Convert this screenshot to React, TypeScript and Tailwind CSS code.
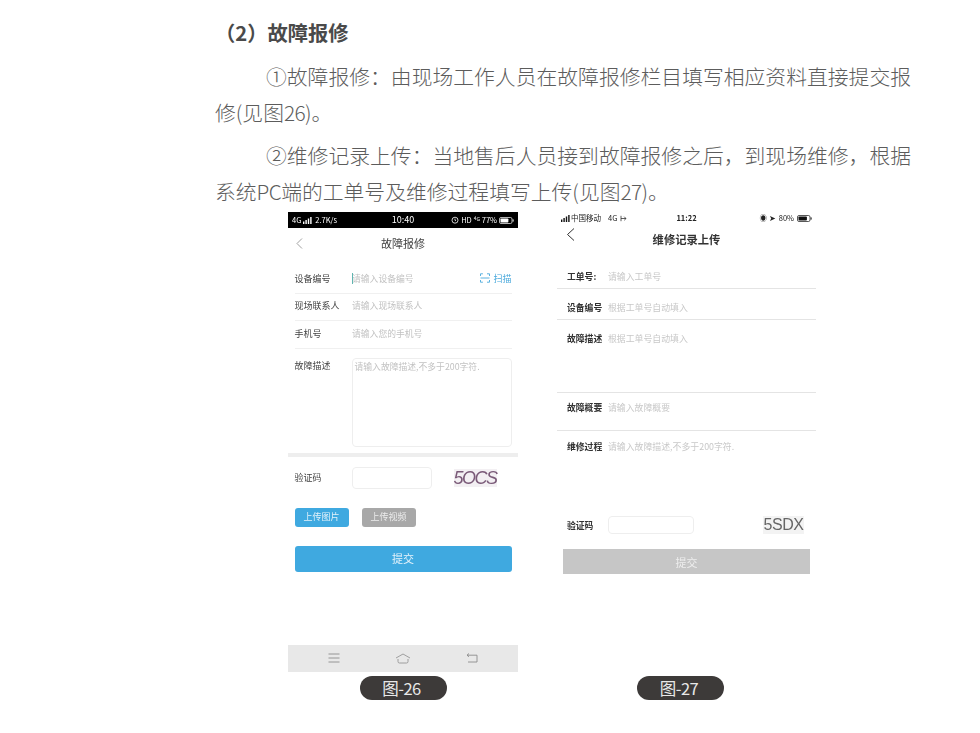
const cjk = { fontFamily: '"Noto Sans CJK SC", "Noto Sans", sans-serif' }

function StatusBattery({ level, dark }: { level: number; dark?: boolean }) {
  const color = dark ? '#ffffff' : '#111111'
  return (
    <svg width="15" height="7" viewBox="0 0 15 7">
      <rect x="0.5" y="0.5" width="12.5" height="6" rx="1.5" fill="none" stroke={color} strokeWidth="0.7" />
      <rect x="1.5" y="1.5" width={10.5 * level} height="4" rx="0.8" fill={color} />
      <rect x="13.6" y="2.4" width="1" height="2.2" fill={color} />
    </svg>
  )
}

function Signal({ color }: { color: string }) {
  return (
    <svg width="9" height="7" viewBox="0 0 9 7" fill={color}>
      <rect x="0" y="4.5" width="1.4" height="2.5" />
      <rect x="2.4" y="3" width="1.4" height="4" />
      <rect x="4.8" y="1.5" width="1.4" height="5.5" />
      <rect x="7.2" y="0" width="1.4" height="7" />
    </svg>
  )
}

function Row({ label, hint, cursor, extra }: { label: string; hint: string; cursor?: boolean; extra?: React.ReactNode }) {
  return (
    <div className="flex h-[27.5px] items-center border-b border-[#f0f0f0] pb-[2px]">
      <div className="w-[57.5px] text-[9px] text-[#444]">{label}</div>
      <div className="relative flex-1 text-[8.8px] text-[#c2c2c2]">
        {cursor && <span className="absolute left-0 top-[1px] h-[11px] w-[1px] bg-[#5fb5b0]" />}
        {hint}
      </div>
      {extra}
    </div>
  )
}

function Row2({ label, hint, h }: { label: string; hint: string; h: string }) {
  return (
    <div className={`${h} border-b border-[#e4e4e4] px-[10px]`}>
      <div className="flex items-center">
        <div className="w-[41px] text-[8.8px] font-bold text-[#333]">{label}</div>
        <div className="text-[8.9px] text-[#c8c8c8]">{hint}</div>
      </div>
    </div>
  )
}

function Caption({ children }: { children: React.ReactNode }) {
  return (
    <div className="flex h-6 w-[87px] items-center justify-center rounded-full bg-[#3d3a39] pr-[3px] text-[16.5px] tracking-[-0.5px] text-[#e8e8e8]">
      {children}
    </div>
  )
}

function RepairPhone() {
  return (
    <div className="flex w-[230px] flex-col items-center">
      <div className="h-[460px] w-full blur-[0.4px]">
        <div className="grid h-4 grid-cols-3 items-center bg-black px-[4px] text-[7.5px] text-white">
          <div className="flex items-center gap-[2px]">
            <span>4G</span>
            <Signal color="#fff" />
            <span className="ml-[1px]">2.7K/s</span>
          </div>
          <span className="text-center text-[9px]">10:40</span>
          <div className="flex items-center justify-end gap-[2px]">
            <svg width="8" height="8" viewBox="0 0 8 8" fill="none" stroke="#fff" strokeWidth="0.8">
              <circle cx="4" cy="4.2" r="3" />
              <path d="M4 2.600v1.700l1 .6" />
            </svg>
            <span>HD ⁴ᴳ 77%</span>
            <StatusBattery level={0.75} dark />
          </div>
        </div>
        <div className="relative flex h-[30px] items-center justify-center text-[11px] text-[#444]">
          <svg className="absolute left-[8px] top-[10px]" width="7" height="11" viewBox="0 0 7 11" fill="none" stroke="#888" strokeWidth="0.8">
            <path d="M6 .5 1 5.500l5 5" />
          </svg>
          故障报修
        </div>
        <div className="px-[6.5px] pt-[8px]">
          <Row
            label="设备编号"
            hint="请输入设备编号"
            cursor
            extra={
              <div className="flex items-center gap-[3px] text-[9px] text-[#4aa9dc]">
                <svg width="10" height="10" viewBox="0 0 10 10" fill="none" stroke="#4aa9dc" strokeWidth="0.9">
                  <path d="M.5 3V.8h2.400M7 .8h2.500V3M.5 7v2.200h2.400M7 9.200h2.500V7M.5 5h9" />
                </svg>
                扫描
              </div>
            }
          />
          <Row label="现场联系人" hint="请输入现场联系人" />
          <Row label="手机号" hint="请输入您的手机号" />
          <div className="mt-[9px] flex h-[89px]">
            <div className="w-[57px] pt-[1px] text-[9px] text-[#444]">故障描述</div>
            <div className="flex-1 rounded-[4px] border border-[#eeeeee] px-[2px] py-[1px] text-[8.8px] text-[#c2c2c2]">
              请输入故障描述,不多于200字符.
            </div>
          </div>
        </div>
        <div className="mt-[6px] h-[4px] bg-[#eeeeee]" />
        <div className="mt-[10px] flex items-center px-[6.5px]">
          <div className="w-[57px] text-[9px] text-[#444]">验证码</div>
          <div className="h-[22px] w-[80px] rounded-[4px] border border-[#eeeeee]" />
          <div className="ml-[22px] flex h-[18px] w-[43px] items-center justify-center bg-[#f3f0f3] font-['Liberation_Sans',sans-serif] text-[18px] italic leading-none tracking-[-1.5px] text-[#7a5a78]">
            5OCS
          </div>
        </div>
        <div className="mt-[19px] flex gap-[13px] px-[6.5px]">
          <div className="flex h-[19px] w-[54px] items-center justify-center rounded-[3px] bg-[#3fa9e0] text-[9px] text-[#e4f2fa]">上传图片</div>
          <div className="flex h-[19px] w-[54px] items-center justify-center rounded-[3px] bg-[#a8a8a8] text-[9px] text-[#ececec]">上传视频</div>
        </div>
        <div className="mx-[6.5px] mt-[19px] flex h-[26px] items-center justify-center rounded-[3px] bg-[#3fa9e0] text-[11px] text-[#e8f4fb]">
          提交
        </div>
        <div className="mt-[73px] flex h-[27px] items-center justify-around bg-[#e8e8e8] px-[12px]">
          <svg width="12" height="10" viewBox="0 0 12 10" stroke="#8c8c8c" strokeWidth="0.9">
            <path d="M.5 1h11M.5 5h11M.5 9h11" />
          </svg>
          <svg width="16" height="11" viewBox="0 0 16 11" fill="none" stroke="#8c8c8c" strokeWidth="0.8">
            <path d="M1 5 8 1l7 4M3 6v2.500q0 1.500 1.500 1.500h7q1.500 0 1.500-1.500V6" />
          </svg>
          <svg width="12" height="10" viewBox="0 0 12 10" fill="none" stroke="#8c8c8c" strokeWidth="0.9">
            <path d="M3 .5 1 2.200l2 1.600M1 2.200h10V9H2" />
          </svg>
        </div>
      </div>
      <div className="mt-[4px]">
        <Caption>图-26</Caption>
      </div>
    </div>
  )
}

function RecordPhone() {
  return (
    <div className="flex w-[259px] flex-col items-center">
      <div className="h-[460px] w-full blur-[0.4px]">
        <div className="grid h-3 grid-cols-3 items-center px-[4px] text-[7.5px] text-[#222]">
          <div className="flex items-center gap-[1px]">
            <Signal color="#111" />
            <span className="whitespace-nowrap">中国移动</span>
            <span className="ml-[6px]">4G</span>
            <svg className="ml-[2px]" width="7" height="7" viewBox="0 0 7 7" fill="none" stroke="#333" strokeWidth="0.8">
              <path d="M1 .8v5.400M1 3.500h5M4.200 1.700 6 3.500 4.200 5.300" />
            </svg>
          </div>
          <span className="text-center font-bold">11:22</span>
          <div className="flex items-center justify-end gap-[3px]">
            <span>◉ ➤</span>
            <span>80%</span>
            <StatusBattery level={0.8} />
          </div>
        </div>
        <div className="relative flex h-[28px] items-center justify-center pt-[2px] text-[11.3px] font-bold text-[#333]">
          <svg className="absolute left-[9px] top-[4px]" width="9" height="13" viewBox="0 0 9 13" fill="none" stroke="#333" strokeWidth="1">
            <path d="M8 .5 1.500 6.500 8 12.500" />
          </svg>
          维修记录上传
        </div>
        <div className="pt-[18px]">
          <Row2 label="工单号:" hint="请输入工单号" h="h-[19px]" />
          <Row2 label="设备编号" hint="根据工单号自动填入" h="mt-[12px] h-[19px]" />
          <Row2 label="故障描述" hint="根据工单号自动填入" h="mt-[12px] h-[61px]" />
          <Row2 label="故障概要" hint="请输入故障概要" h="mt-[8px] h-[30px]" />
          <div className="mt-[9px] flex items-center px-[10px]">
            <div className="w-[41px] text-[8.8px] font-bold text-[#333]">维修过程</div>
            <div className="text-[8.9px] text-[#c8c8c8]">请输入故障描述,不多于200字符.</div>
          </div>
        </div>
        <div className="mt-[63px] flex items-center px-[10px]">
          <div className="w-[41px] text-[8.8px] font-bold text-[#333]">验证码</div>
          <div className="h-[18px] w-[86px] rounded-[4px] border border-[#eeeeee]" />
          <div className="ml-[69px] flex h-[18px] w-[41px] items-center justify-center bg-[#f3f3f3] font-['Liberation_Sans',sans-serif] text-[16px] leading-none tracking-[-0.5px] text-[#666]">
            5SDX
          </div>
        </div>
        <div className="mx-[6px] mt-[15px] flex h-[25px] items-center justify-center bg-[#c6c6c6] text-[11px] text-[#eeeeee]">
          提交
        </div>
      </div>
      <div className="mr-[12px] mt-[4px]">
        <Caption>图-27</Caption>
      </div>
    </div>
  )
}

function Num({ children }: { children: React.ReactNode }) {
  return <span className="tracking-[-0.6px]">{children}</span>
}

export default function App() {
  return (
    <div className="h-[733px] w-[980px] overflow-hidden bg-white pl-[215px] pt-[14px] text-[#5c5c5c]" style={cjk}>
      <div className="w-[696px] text-[20.8px] font-light leading-[36px]">
        <h2 className="mb-2 text-[20.3px] font-bold text-[#4a4a4a]">（2）故障报修</h2>
        <p className="indent-[51px] text-justify">①故障报修：由现场工作人员在故障报修栏目填写相应资料直接提交报修(见图<Num>26</Num>)。</p>
        <p className="mt-[7px] indent-[51px] text-justify">②维修记录上传：当地售后人员接到故障报修之后，到现场维修，根据系统<Num>PC</Num>端的工单号及维修过程填写上传(见图<Num>27</Num>)。</p>
      </div>
      <div className="mt-[3px] flex gap-[39px] pl-[73px]">
        <RepairPhone />
        <RecordPhone />
      </div>
    </div>
  )
}
